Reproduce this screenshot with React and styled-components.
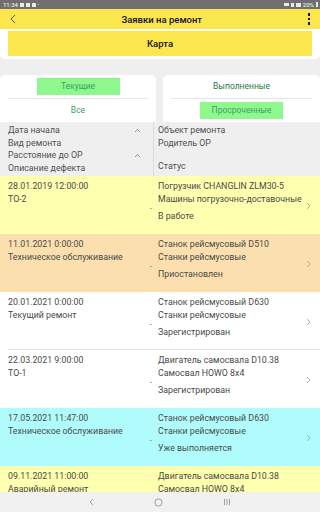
import React from "react";
import styled, { createGlobalStyle } from "styled-components";

const Global = createGlobalStyle`
  html, body { margin: 0; padding: 0; }
  body {
    font-family: Roboto, "Noto Sans", Arial, sans-serif;
    background: #efefef;
    overflow: hidden;
  }
`;

const Screen = styled.div`
  width: 320px;
  height: 512px;
  display: flex;
  flex-direction: column;
  background: #efefef;
  overflow: hidden;
`;

const StatusBar = styled.div`
  height: 9px;
  flex: none;
  background: #6f6f6f;
  color: #fff;
  font-size: 6px;
  display: flex;
  align-items: center;
  justify-content: space-between;
  padding: 0 2px 0 3px;
  .left, .right { display: flex; align-items: center; gap: 2px; }
  i {
    display: inline-block;
    width: 4px;
    height: 4px;
    background: #e8e8e8;
  }
  .dot { width: 1.5px; height: 1.5px; border-radius: 50%; }
`;

const Header = styled.div`
  height: 20px;
  flex: none;
  background: #fce64e;
  display: flex;
  align-items: center;
  justify-content: space-between;
  padding: 0 10px;
  h1 {
    margin: 0;
    font-size: 9.5px;
    font-weight: 500;
    color: #111;
  }
`;

const Kebab = styled.div`
  display: flex;
  flex-direction: column;
  gap: 2px;
  span { width: 2.5px; height: 2.5px; background: #111; }
`;

const MapPanel = styled.div`
  background: #fff;
  padding: 2px 8px 3px;
  border-radius: 0 0 5px 5px;
  flex: none;
`;

const MapButton = styled.div`
  height: 25px;
  background: #fce64e;
  display: flex;
  align-items: center;
  justify-content: center;
  font-size: 9.5px;
  font-weight: 500;
  color: #111;
`;

const Filters = styled.div`
  display: grid;
  grid-template-columns: 156px 157px;
  gap: 7px;
  margin-top: 16px;
  flex: none;
`;

const FilterCard = styled.div`
  background: #fff;
  border-radius: 5px 5px 0 0;
  height: 47px;
  display: grid;
  grid-template-rows: 1fr 1fr;
  padding: 0 8px;
`;

const FilterCell = styled.div`
  display: flex;
  align-items: center;
  justify-content: center;
  border-bottom: ${(p) => (p.$line ? "1px solid #e6e6e6" : "none")};
`;

const FilterItem = styled.span`
  width: 83px;
  height: 17px;
  display: flex;
  align-items: center;
  justify-content: center;
  font-size: 8.5px;
  color: ${(p) => (p.$dark ? "#1d7a45" : "#3aa06a")};
  background: ${(p) => (p.$active ? "#8ff88c" : "transparent")};
`;

const ColHead = styled.div`
  display: grid;
  grid-template-columns: 154px 1fr;
  height: 54px;
  flex: none;
  font-size: 8.8px;
  color: #4f4f4f;
`;

const HeadLeft = styled.div`
  border-right: 1px solid #dcdcdc;
  padding: 2px 8px 0;
`;

const HeadRight = styled.div`
  padding: 2px 0 0 4px;
`;

const HeadLine = styled.div`
  height: ${(p) => p.$h || 12.6}px;
  display: flex;
  align-items: center;
  justify-content: space-between;
  ${(p) => (p.$bottom ? "align-items: flex-end; padding-bottom: 3px; box-sizing: border-box;" : "")}
`;

const Caret = styled.svg`
  width: 7px;
  height: 5px;
  margin-right: 4px;
`;

const List = styled.div`
  flex: 1;
  overflow: hidden;
`;

const Row = styled.div`
  height: 58px;
  box-sizing: border-box;
  background: ${(p) => p.$bg};
  display: grid;
  grid-template-columns: 154px 1fr 14px;
  font-size: 8.8px;
  color: #4a4a4a;
  position: relative;
  &::after {
    content: "";
    display: ${(p) => (p.$line ? "block" : "none")};
    position: absolute;
    left: 8px;
    right: 0;
    bottom: 0;
    height: 1px;
    background: #e4e4e4;
  }
`;

const RowLeft = styled.div`
  position: relative;
  padding: 4px 8px 0;
  span { display: block; height: 13px; line-height: 13px; }
  &::after {
    content: "-";
    position: absolute;
    right: 2px;
    top: 28px;
    font-size: 8px;
    color: #666;
  }
`;

const RowRight = styled.div`
  padding: 4px 0 0 4px;
  span { display: block; height: 13px; line-height: 13px; white-space: nowrap; }
  .status { margin-top: 4px; }
`;

const Arrow = styled.div`
  display: flex;
  align-items: center;
  padding-top: 1px;
`;

const NavBar = styled.div`
  height: 20px;
  flex: none;
  background: #f1f1f1;
  display: flex;
  align-items: center;
  justify-content: center;
  gap: 60px;
`;

const ChevronRight = () => (
  <svg width="5" height="8" viewBox="0 0 5 8">
    <path d="M1 1 L4 4 L1 7" fill="none" stroke="#9a9a9a" strokeWidth="0.8" />
  </svg>
);

const rows = [
  { bg: "#ffffb0", date: "28.01.2019 12:00:00", kind: "ТО-2", obj: "Погрузчик CHANGLIN ZLM30-5", parent: "Машины погрузочно-доставочные", status: "В работе" },
  { bg: "#fcdfae", date: "11.01.2021 0:00:00", kind: "Техническое обслуживание", obj: "Станок рейсмусовый D510", parent: "Станки рейсмусовые", status: "Приостановлен" },
  { bg: "#ffffff", line: true, date: "20.01.2021 0:00:00", kind: "Текущий ремонт", obj: "Станок рейсмусовый D630", parent: "Станки рейсмусовые", status: "Зарегистрирован" },
  { bg: "#ffffff", date: "22.03.2021 9:00:00", kind: "ТО-1", obj: "Двигатель самосвала D10.38", parent: "Самосвал HOWO 8x4", status: "Зарегистрирован" },
  { bg: "#b0fcfc", date: "17.05.2021 11:47:00", kind: "Техническое обслуживание", obj: "Станок рейсмусовый D630", parent: "Станки рейсмусовые", status: "Уже выполняется" },
  { bg: "#ffffb0", date: "09.11.2021 11:00:00", kind: "Аварийный ремонт", obj: "Двигатель самосвала D10.38", parent: "Самосвал HOWO 8x4", status: "Зарегистрирован" },
];

const UpCaret = () => (
  <Caret viewBox="0 0 7 5">
    <path d="M1 4 L3.5 1.5 L6 4" fill="none" stroke="#777" strokeWidth="0.8" />
  </Caret>
);

export default function App() {
  return (
    <Screen>
      <Global />
      <StatusBar>
        <div className="left">
          <span>11:34</span>
          <i />
          <i />
          <i />
          <i className="dot" />
        </div>
        <div className="right">
          <i style={{ width: 5, height: 3 }} />
          <i style={{ width: 3 }} />
          <i style={{ width: 5 }} />
          <span>20%</span>
          <i style={{ width: 2, height: 5 }} />
        </div>
      </StatusBar>
      <Header>
        <svg width="6" height="10" viewBox="0 0 6 10">
          <path d="M5 1 L1 5 L5 9" fill="none" stroke="#333" strokeWidth="0.8" />
        </svg>
        <h1>Заявки на ремонт</h1>
        <Kebab>
          <span />
          <span />
          <span />
        </Kebab>
      </Header>
      <MapPanel>
        <MapButton>Карта</MapButton>
      </MapPanel>
      <Filters>
        <FilterCard>
          <FilterCell $line>
            <FilterItem $active>Текущие</FilterItem>
          </FilterCell>
          <FilterCell>
            <FilterItem>Все</FilterItem>
          </FilterCell>
        </FilterCard>
        <FilterCard>
          <FilterCell $line>
            <FilterItem $dark>Выполненные</FilterItem>
          </FilterCell>
          <FilterCell>
            <FilterItem $active>Просроченные</FilterItem>
          </FilterCell>
        </FilterCard>
      </Filters>
      <ColHead>
        <HeadLeft>
          <HeadLine>
            Дата начала <UpCaret />
          </HeadLine>
          <HeadLine>Вид ремонта</HeadLine>
          <HeadLine>
            Расстояние до ОР <UpCaret />
          </HeadLine>
          <HeadLine>Описание дефекта</HeadLine>
        </HeadLeft>
        <HeadRight>
          <HeadLine>Объект ремонта</HeadLine>
          <HeadLine>Родитель ОР</HeadLine>
          <HeadLine $h={25.2} $bottom>
            Статус
          </HeadLine>
        </HeadRight>
      </ColHead>
      <List>
        {rows.map((r, i) => (
          <Row key={i} $bg={r.bg} $line={r.line}>
            <RowLeft>
              <span>{r.date}</span>
              <span>{r.kind}</span>
            </RowLeft>
            <RowRight>
              <span>{r.obj}</span>
              <span>{r.parent}</span>
              <span className="status">{r.status}</span>
            </RowRight>
            <Arrow>
              <ChevronRight />
            </Arrow>
          </Row>
        ))}
      </List>
      <NavBar>
        <svg width="5" height="8" viewBox="0 0 5 8">
          <path d="M4 1 L1 4 L4 7" fill="none" stroke="#8a8a8a" strokeWidth="0.8" />
        </svg>
        <svg width="9" height="9" viewBox="0 0 9 9">
          <rect x="1" y="1" width="7" height="7" rx="3" fill="none" stroke="#8a8a8a" strokeWidth="0.8" />
        </svg>
        <svg width="8" height="8" viewBox="0 0 8 8">
          <path d="M1.5 1 V7 M4 1 V7 M6.5 1 V7" stroke="#8a8a8a" strokeWidth="0.8" />
        </svg>
      </NavBar>
    </Screen>
  );
}
